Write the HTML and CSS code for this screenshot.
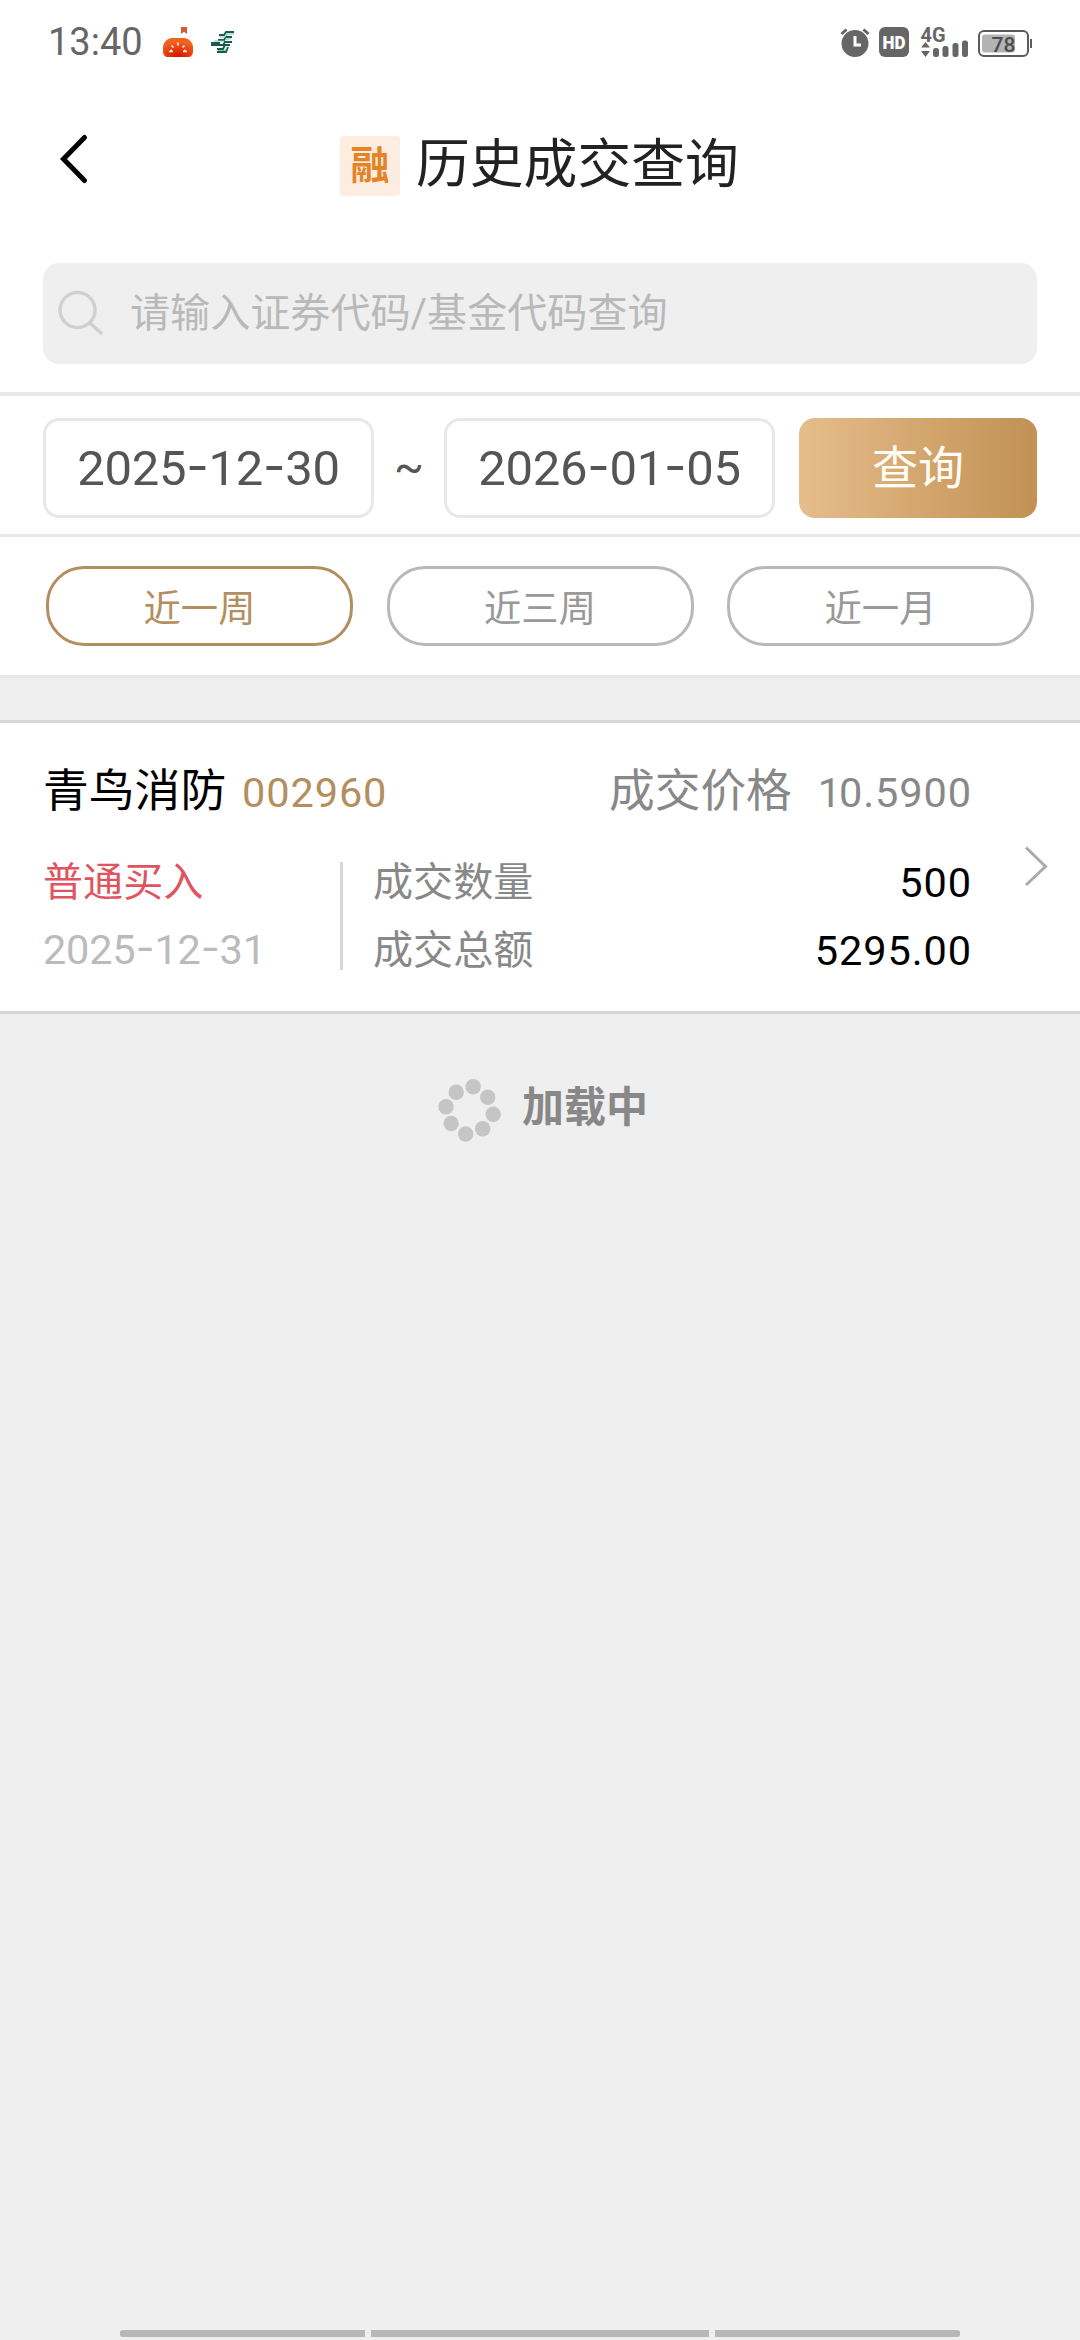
FILE: index.html
```html
<!DOCTYPE html>
<html lang="zh-CN">
<head>
<meta charset="utf-8">
<title>历史成交查询</title>
<link rel="stylesheet" href="styles.css">
</head>
<body>
<div class="status">
  <span class="time">13:40</span>
  <svg class="status-apps" width="76" height="34" viewBox="160 25 76 34">
    <defs>
      <radialGradient id="pumpkin" cx=".5" cy=".95" r=".75"><stop offset="0" stop-color="#cf1503"/><stop offset=".5" stop-color="#e53a0e"/><stop offset="1" stop-color="#f0631f"/></radialGradient>
    </defs>
    <path d="M181 27h6v7l-3-2.300-3 2.300z" fill="#d65a38"/>
    <path d="M172 38h12c4 0 9 4 9 9v4c0 4-2 6-5 6h-20c-3 0-5-2-5-6v-4c0-5 5-9 9-9z" fill="url(#pumpkin)"/>
    <path d="M178 42.500v3M171.500 45.500l2 2M184.500 45.500l-2 2M169 51.500h4M183 51.500h4M170.500 50l1.500 1M185.500 50l-1.500 1" fill="none" stroke="#fff0df" stroke-width="1.600"/>
    <path d="M234 32h-8l-2 3h-5M232 37h-6l-2 3h-6M232 42h-7l-2 3h-11v-2h8M230 45h-5l-2 4h-6M217 52h9l2-5" fill="none" stroke="#175c4d" stroke-width="1.900"/>
    <path d="M234 34h-7l-2 3h-5M214 41h10M231 39h-6M218 50.500h7l2-3" fill="none" stroke="#79c5a5" stroke-width="1.200"/>
  </svg>
  <svg class="status-system" width="194" height="44" viewBox="840 20 194 44">
    <g fill="#666">
      <circle cx="855" cy="43.500" r="13.500"/>
      <rect x="879" y="27" width="30" height="30" rx="6"/>
      <path d="M925.500 42l4.500 5.500h-9zM925.500 57l4.500-6h-9z"/>
      <rect x="933" y="48" width="6" height="9" rx="2.500"/>
      <rect x="942.500" y="46" width="6" height="11" rx="2.500"/>
      <rect x="952.500" y="43" width="6" height="14" rx="2.500"/>
      <rect x="962" y="40.500" width="6" height="16.500" rx="2.500"/>
    </g>
    <path d="M841.500 34l5-4.500M868.500 34l-5-4.500" stroke="#666" stroke-width="3"/>
    <path d="M855 36v9h6" fill="none" stroke="#fff" stroke-width="3"/>
    <text x="894" y="49" class="hd-text" textLength="23" lengthAdjust="spacingAndGlyphs">HD</text>
    <text x="920.500" y="41.500" class="net-text" textLength="25" lengthAdjust="spacingAndGlyphs">4G</text>
    <rect x="979" y="31" width="49" height="25" rx="5" fill="#fff" stroke="#5b5b5b" stroke-width="2"/>
    <rect x="982" y="34.500" width="33" height="18" rx="3" fill="#b3b3b3"/>
    <path d="M1031 39v9" stroke="#5b5b5b" stroke-width="2"/>
    <text x="1003.500" y="51.500" class="battery-text">78</text>
  </svg>
</div>

<header class="header">
  <svg class="back" width="30" height="52" viewBox="60 133 30 52"><path d="M84.500 137.500L63.500 159l21 21.500" fill="none" stroke="#000" stroke-width="5" stroke-linecap="round"/></svg>
  <span class="badge">融</span>
  <h1 class="title">历史成交查询</h1>
</header>

<section class="search-area">
  <div class="search">
    <svg width="48" height="48" viewBox="57 289 48 48"><g fill="none" stroke="#d0d0d0" stroke-width="3.500"><circle cx="77.500" cy="309" r="17.500"/><path d="M90 322l12 11"/></g></svg>
    <span class="placeholder">请输入证券代码/基金代码查询</span>
  </div>
</section>

<section class="range">
  <div class="date-field">2025<i class="dash">-</i>12<i class="dash">-</i>30</div>
  <span class="tilde">~</span>
  <div class="date-field">2026<i class="dash">-</i>01<i class="dash">-</i>05</div>
  <div class="query">查询</div>
</section>

<nav class="presets">
  <span class="pill pill-active">近一周</span>
  <span class="pill">近三周</span>
  <span class="pill">近一月</span>
</nav>

<main class="deal">
  <div class="deal-head">
    <span class="name">青鸟消防</span>
    <span class="code">002960</span>
    <span class="price-label">成交价格</span>
    <span class="price"><i class="one">1</i>0.5900</span>
  </div>
  <div class="deal-body">
    <div class="side">
      <span class="buy">普通买入</span>
      <span class="day">2025<i class="dash">-</i>12<i class="dash">-</i>31</span>
    </div>
    <div class="figures">
      <div class="figure"><span>成交数量</span><span class="value">500</span></div>
      <div class="figure"><span>成交总额</span><span class="value">5295.00</span></div>
    </div>
  </div>
  <svg class="more" width="26" height="44" viewBox="1023 844 26 44"><path d="M1026 847.500L1045.500 866.500L1026 885" fill="none" stroke="#ababab" stroke-width="3"/></svg>
</main>

<div class="loading">
  <svg width="64" height="64" viewBox="438 1078 64 64"><g fill="#c5c5c5"><circle cx="473.200" cy="1086.700" r="7.700"/><circle cx="487.700" cy="1097.300" r="7.700"/><circle cx="493.200" cy="1114.200" r="7.700"/><circle cx="482.700" cy="1128.800" r="7.700"/><circle cx="465.700" cy="1134" r="7.700"/><circle cx="451.200" cy="1123.500" r="7.700"/><circle cx="446" cy="1106.700" r="7.700"/><circle cx="456.200" cy="1092.200" r="7.700"/></g></svg>
  <span>加载中</span>
</div>

<footer class="nav-hint"><i></i><i></i><i></i></footer>
</body>
</html>
```
FILE: styles.css
```css
* { box-sizing: border-box; }
body {
  margin: 0;
  width: 1080px;
  height: 2340px;
  display: flex;
  flex-direction: column;
  background: #efefef;
  font-family: Roboto, "Noto Sans CJK SC", sans-serif;
  white-space: nowrap;
}
svg { display: block; flex: none; }

.status {
  height: 84px;
  display: flex;
  align-items: center;
  padding: 0 46px 0 48px;
  background: #fff;
}
.time { width: 112px; font-size: 38px; line-height: 86px; color: #666; }
.status-system { margin-left: auto; }
.hd-text { font: 900 19px Roboto, sans-serif; fill: #fff; text-anchor: middle; }
.net-text { font: 700 20px Roboto, sans-serif; fill: #666; }
.battery-text { font: 500 21px Roboto, sans-serif; fill: #4c4c4c; text-anchor: middle; }

.header {
  height: 152px;
  display: flex;
  align-items: flex-start;
  padding: 49px 60px 0;
  background: #fff;
}
.badge {
  width: 60px;
  height: 60px;
  margin: 3px 16px 0 250px;
  border-radius: 4px;
  background: #fcede0;
  color: #e48427;
  font-size: 39px;
  font-weight: 700;
  line-height: 61px;
  text-align: center;
}
.title { margin: 0; font-size: 53.800px; font-weight: 400; line-height: 64px; color: #222; }

.search-area { height: 160px; padding: 27px 43px 0; background: #fff; border-bottom: 4px solid #e8e8e8; }
.search {
  height: 101px;
  display: flex;
  align-items: center;
  padding-left: 14px;
  gap: 25px;
  border-radius: 16px;
  background: #efefef;
}
.placeholder { font-size: 40.100px; line-height: 99px; color: #b9b9b9; }

.range {
  height: 141px;
  display: flex;
  padding: 22px 43px 0;
  background: #fff;
  border-bottom: 3px solid #e8e8e8;
}
.date-field {
  width: 331px;
  height: 100px;
  border: 3px solid #e8e8e8;
  border-radius: 16px;
  font-size: 49px;
  letter-spacing: -.3px;
  line-height: 95px;
  text-align: center;
  color: #555;
}
.dash { font-family: Inter, sans-serif; font-style: normal; line-height: 1; vertical-align: 2px; }
.one { font-style: normal; margin: 0 -3px 0 -2px; }
.tilde { width: 70px; font-size: 44px; line-height: 98px; text-align: center; color: #555; }
.query {
  width: 238px;
  height: 100px;
  margin-left: 24px;
  border-radius: 16px;
  background: linear-gradient(90deg, #e6bd8b, #d6a972 45%, #c19156);
  color: #fffdf5;
  font-size: 46px;
  line-height: 101px;
  text-align: center;
}

.presets {
  height: 141px;
  display: flex;
  justify-content: space-between;
  padding: 29px 46px 0;
  background: #fff;
  border-bottom: 3px solid #e8e8e8;
}
.pill {
  width: 307px;
  height: 80px;
  border: 3px solid #b8b8b8;
  border-radius: 38px;
  color: #999;
  font-size: 37.300px;
  line-height: 81px;
  text-align: center;
}
.pill-active { border-color: #b38f60; color: #b38f60; }

.deal {
  position: relative;
  height: 294px;
  margin-top: 42px;
  padding: 41px 108px 0 43px;
  background: #fff;
  border-top: 3px solid #d7d7d7;
  border-bottom: 3px solid #d7d7d7;
}
.deal-head { display: flex; height: 56px; line-height: 56px; font-size: 45.800px; }
.name { width: 199px; color: #000; }
.code, .price, .value, .day { font-size: 41.500px; letter-spacing: .9px; }
.code, .price { line-height: 58px; }
.code { color: #b38f60; }
.price-label { margin-left: auto; margin-right: 28px; font-size: 45.700px; color: #888; }
.price { color: #888; }
.deal-body { display: flex; height: 108px; margin-top: 42px; font-size: 40.100px; }
.side { display: flex; flex-direction: column; width: 297px; line-height: 68px; margin-top: -13px; }
.buy { color: #e0545f; }
.day { color: #bbb; letter-spacing: -.2px; line-height: 66px; }
.figures { flex: 1; border-left: 3px solid #d8d8d8; padding-left: 30px; }
.figure { display: flex; justify-content: space-between; line-height: 68px; color: #888; position: relative; top: -13px; }
.figure .value { color: #000; line-height: 67px; }
.more { position: absolute; left: 1023px; top: 121px; }

.loading {
  display: flex;
  padding: 64px 0 0 438px;
  gap: 20px;
  color: #888;
  font-size: 42px;
  font-weight: 700;
  line-height: 59px;
}
.nav-hint { display: flex; gap: 6px; height: 7px; margin: auto 120px 3px; }
.nav-hint i { width: 245px; background: #b7b7b7; }
.nav-hint i:nth-child(2) { width: 338px; }
.nav-hint i:first-child { border-radius: 3px 0 0 3px; }
.nav-hint i:last-child { border-radius: 0 3px 3px 0; }
```
